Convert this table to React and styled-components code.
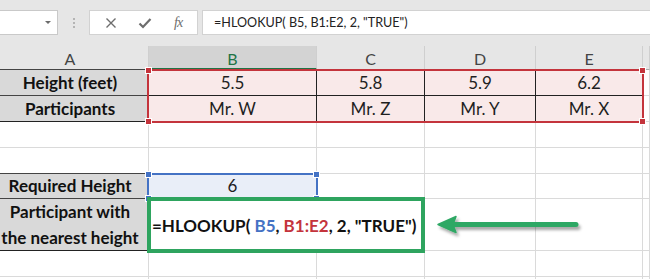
import React from 'react';
import styled, { createGlobalStyle, css } from 'styled-components';

const GlobalStyle = createGlobalStyle`
    html, body {
        margin: 0;
        background: #fff;
    }
    body {
        font-family: Lato, "Open Sans", sans-serif;
        overflow: hidden;
    }
`;

const StyledWindow = styled.div`
    width: 650px;
    height: 279px;
    overflow: hidden;
    display: flex;
    flex-direction: column;
    background: #fff;
`;

const StyledToolbar = styled.div`
    height: 46px;
    flex: none;
    display: flex;
    align-items: flex-start;
    padding-top: 10px;
    box-sizing: border-box;
    background: #e6e6e6;
`;

const StyledNameBox = styled.div`
    width: 58px;
    height: 25px;
    box-sizing: border-box;
    background: #fff;
    border: 1px solid #c9c9c9;
    border-left: none;
    display: flex;
    align-items: center;
    justify-content: flex-end;
    padding-right: 6px;
`;

const StyledCaret = styled.span`
    width: 0;
    height: 0;
    border-left: 3px solid transparent;
    border-right: 3px solid transparent;
    border-top: 3px solid #6b6b6b;
`;

const StyledGrip = styled.div`
    width: 31px;
    height: 25px;
    display: flex;
    flex-direction: column;
    align-items: center;
    justify-content: center;
    gap: 2px;

    span {
        width: 2px;
        height: 2px;
        background: #b4b4b4;
    }
`;

const StyledFxBox = styled.div`
    width: 109px;
    height: 25px;
    box-sizing: border-box;
    background: #fff;
    border: 1px solid #d2d2d2;
    display: flex;
    align-items: center;
    justify-content: space-around;
    padding: 0 4px;
    color: #6d6d6d;
`;

const StyledFx = styled.span`
    font-family: "Liberation Serif", serif;
    font-style: italic;
    font-size: 14px;
    color: #6d6d6d;
    letter-spacing: -1px;
`;

const StyledFormulaInput = styled.div`
    flex: 1;
    height: 25px;
    margin-left: 4px;
    box-sizing: border-box;
    background: #fff;
    border: 1px solid #d2d2d2;
    border-right: none;
    display: flex;
    align-items: center;
    padding-left: 11px;
    font-size: 12.6px;
    color: #222;
`;

const StyledSheet = styled.div`
    margin-left: -8px;
    display: grid;
    grid-template-columns: 157px 168px 108px 111px 107px 1fr;
    grid-template-rows: 24px 26px 26px 26px 26px 25px 52px 26px 26px;
`;

const StyledHeader = styled.div`
    grid-row: 1;
    grid-column: ${props => props.$col};
    box-sizing: border-box;
    display: flex;
    align-items: center;
    justify-content: center;
    font-size: 16px;
    color: #444;
    background: #e6e6e6;
    border-right: 1px solid #cfcfcf;
    border-bottom: 1px solid #ababab;
    padding-top: 2px;

    ${props =>
        props.$active &&
        css`
            background: #d3d3d3;
            color: #217346;
            border-bottom: 2px solid #217346;
        `}
`;

const StyledCell = styled.div`
    grid-row: ${props => props.$row};
    grid-column: ${props => props.$col};
    box-sizing: border-box;
    display: flex;
    align-items: center;
    justify-content: center;
    text-align: center;
    font-size: 17px;
    line-height: 26px;
    color: #1f1f1f;
    white-space: nowrap;
    border-right: 1px solid #dadada;
    border-bottom: 1px solid #dadada;

    ${props =>
        props.$kind === 'label' &&
        css`
            background: #d9d9d9;
            font-weight: 700;
            color: #111;
            border-bottom-color: #222;
            box-shadow: 0 -1px 0 #444;
        `}

    ${props =>
        props.$kind === 'value' &&
        css`
            background: #f9e9e9;
            border-right-color: #222;
            border-bottom-color: #222;
        `}

    ${props =>
        props.$kind === 'input' &&
        css`
            background: #e9eef8;
        `}
`;

const StyledRange = styled.div`
    position: relative;
    z-index: 2;
    box-sizing: border-box;
    grid-column: ${props => props.$cols};
    grid-row: ${props => props.$rows};
    margin: -1px -1px -1px -2px;
    border: 2px solid ${props => props.$color};
    pointer-events: none;
`;

const StyledHandle = styled.span`
    position: absolute;
    width: 5px;
    height: 5px;
    background: ${props => props.$color};
    border: 1px solid #fff;
    ${props => (props.$top ? 'top: -4px;' : 'bottom: -4px;')}
    ${props => (props.$left ? 'left: -4px;' : 'right: -4px;')}
`;

const StyledFormulaCell = styled.div`
    z-index: 3;
    grid-column: 2 / 4;
    grid-row: 7 / 8;
    margin: -2px 0 -2px -2px;
    border: 4px solid #2ea45f;
    background: #fff;
    display: flex;
    align-items: center;
    padding-left: 1px;
    font-size: 17px;
    font-weight: 700;
    color: #111;
    white-space: nowrap;
`;

const StyledRef = styled.span`
    color: ${props => props.$color};
`;

const StyledArrowSlot = styled.div`
    grid-column: 4 / 6;
    grid-row: 7 / 8;
    z-index: 2;
    display: flex;
    align-items: center;
    padding-left: 12px;
    padding-top: 1px;
`;

const columns = ['A', 'B', 'C', 'D', 'E', ''];

const rows = [
    ['Height (feet)', '5.5', '5.8', '5.9', '6.2'],
    ['Participants', 'Mr. W', 'Mr. Z', 'Mr. Y', 'Mr. X'],
    [],
    [],
    ['Required Height', '6'],
    [
        <>
            Participant with
            <br />
            the nearest height
        </>,
    ],
    [],
    [],
];

function kindOf(rowIndex, colIndex, value) {
    if (colIndex === 0 && value) return 'label';
    if (rowIndex < 2 && colIndex > 0 && colIndex < 5) return 'value';
    if (rowIndex === 4 && colIndex === 1) return 'input';
    return null;
}

const RangeBox = ({ cols, rows, color }) => (
    <StyledRange $cols={cols} $rows={rows} $color={color}>
        <StyledHandle $color={color} $top $left />
        <StyledHandle $color={color} $top />
        <StyledHandle $color={color} $left />
        <StyledHandle $color={color} />
    </StyledRange>
);

const CancelIcon = () => (
    <svg width="12" height="12" viewBox="0 0 12 12">
        <path d="M1.5 1.5l9 9M10.5 1.5l-9 9" stroke="#6d6d6d" strokeWidth="1.4" />
    </svg>
);

const EnterIcon = () => (
    <svg width="14" height="12" viewBox="0 0 14 12">
        <path d="M1.5 6.5l3.5 3.5L12.5 2" fill="none" stroke="#6d6d6d" strokeWidth="2.2" />
    </svg>
);

const PointerArrow = () => (
    <svg width="150" height="26" viewBox="0 0 150 26">
        <defs>
            <filter id="arrow-shadow" x="-10%" y="-50%" width="120%" height="200%">
                <feDropShadow dx="2" dy="3" stdDeviation="1.8" floodColor="#000" floodOpacity="0.35" />
            </filter>
        </defs>
        <g filter="url(#arrow-shadow)">
            <path d="M16 11.5H139" stroke="#2fa865" strokeWidth="5" strokeLinecap="round" />
            <path d="M1 11.5L19 3.5L16 11.5L19 19.5Z" fill="#2fa865" stroke="#2fa865" strokeWidth="1.5" strokeLinejoin="round" />
        </g>
    </svg>
);

export default function App() {
    return (
        <StyledWindow>
            <GlobalStyle />
            <StyledToolbar>
                <StyledNameBox>
                    <StyledCaret />
                </StyledNameBox>
                <StyledGrip>
                    <span />
                    <span />
                    <span />
                </StyledGrip>
                <StyledFxBox>
                    <CancelIcon />
                    <EnterIcon />
                    <StyledFx>fx</StyledFx>
                </StyledFxBox>
                <StyledFormulaInput>=HLOOKUP( B5, B1:E2, 2, "TRUE")</StyledFormulaInput>
            </StyledToolbar>
            <StyledSheet>
                {columns.map((name, i) => (
                    <StyledHeader key={`h${i}`} $col={i + 1} $active={name === 'B'}>
                        {name}
                    </StyledHeader>
                ))}
                {rows.map((row, r) =>
                    columns.map((_, c) => (
                        <StyledCell
                            key={`${r}-${c}`}
                            $row={r + 2}
                            $col={c + 1}
                            $kind={kindOf(r, c, row[c])}
                        >
                            {row[c]}
                        </StyledCell>
                    ))
                )}
                <RangeBox cols="2 / 6" rows="2 / 4" color="#c4343c" />
                <RangeBox cols="2 / 3" rows="6 / 7" color="#4472c4" />
                <StyledFormulaCell>
                    =HLOOKUP(&nbsp;<StyledRef $color="#4472c4">B5</StyledRef>,&nbsp;
                    <StyledRef $color="#c4343c">B1:E2</StyledRef>, 2, "TRUE")
                </StyledFormulaCell>
                <StyledArrowSlot>
                    <PointerArrow />
                </StyledArrowSlot>
            </StyledSheet>
        </StyledWindow>
    );
}
